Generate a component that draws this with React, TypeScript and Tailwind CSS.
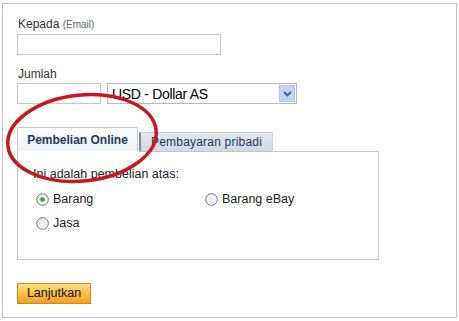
import React from "react";

function Radio({ checked }: { checked?: boolean }) {
  return (
    <svg width="13" height="13" viewBox="0 0 13 13" className="shrink-0">
      <defs>
        <linearGradient id={checked ? "rg1" : "rg2"} x1="0" y1="0" x2="1" y2="1">
          <stop offset="0" stopColor="#e2e2e2" />
          <stop offset="1" stopColor="#ffffff" />
        </linearGradient>
      </defs>
      <circle cx="6.5" cy="6.5" r="5.8" fill={`url(#${checked ? "rg1" : "rg2"})`} stroke="#6f7680" strokeWidth="1" />
      {checked && <circle cx="6.5" cy="6.5" r="2.2" fill="#3f9a3a" />}
    </svg>
  );
}

export default function App() {
  return (
    <div className="w-[459px] h-[321px] bg-white font-['Liberation_Sans',Arial,sans-serif] text-[#333] relative overflow-hidden">
      <div className="ml-[2px] mt-[3px] w-[455px] h-[315px] border border-[#bcc1c9] pl-[14px] pt-[13px] flex flex-col">
        <div className="text-[12px] leading-[14px] pl-[1px]">
          Kepada <span className="text-[10px] text-[#666]">(Email)</span>
        </div>
        <div className="mt-[2px] w-[204px] h-[21px] border border-[#c6c6c6]" />
        <div className="mt-[12px] text-[12px] leading-[14px] pl-[1px]">Jumlah</div>
        <div className="mt-[2px] flex gap-[6px]">
          <div className="w-[84px] h-[21px] border border-[#c6c6c6]" />
          <div className="w-[190px] h-[21px] border border-[#b5b8bd] flex items-center justify-between pl-[4px] pr-[1px]">
            <span className="text-[14px] leading-[16px] text-black tracking-[-0.3px]">USD - Dollar AS</span>
            <div className="w-[16px] h-[17px] bg-[#c5d4f4] border border-[#b2c4ec] flex items-center justify-center">
              <svg width="9" height="6" viewBox="0 0 9 6">
                <path d="M1 1 L4.5 4.5 L8 1" fill="none" stroke="#4a5d86" strokeWidth="1.8" />
              </svg>
            </div>
          </div>
        </div>
        <div className="mt-[23px] flex items-end">
          <div className="w-[121px] h-[24px] border border-b-0 border-[#c8ccd2] bg-gradient-to-b from-[#ffffff] to-[#eef1f5] flex items-center justify-center">
            <span className="text-[12px] font-bold text-[#1c3a60]">Pembelian Online</span>
          </div>
          <div className="ml-[1px] w-[134px] h-[19px] border-l-2 border-l-[#858b94] border-t border-t-[#cdd3db] border-r border-r-[#cdd3db] bg-gradient-to-b from-[#e3e8ef] to-[#d2d9e3] flex items-center pl-[10px]">
            <span className="text-[12px] text-[#1f3658] tracking-[0.2px]">Pembayaran pribadi</span>
          </div>
        </div>
        <div className="w-[362px] h-[109px] border border-t-0 border-[#c4c4c4] relative">
          <div className="absolute left-[121px] right-0 top-0 border-t border-[#c4c4c4]" />
          <div className="pl-[15px] pt-[16px] text-[12.5px] leading-[14px] text-[#222]">Ini adalah pembelian atas:</div>
          <div className="mt-[9px] pl-[18px] flex">
            <div className="w-[169px] flex items-center gap-[4px]">
              <Radio checked />
              <span className="text-[12.5px] text-[#222]">Barang</span>
            </div>
            <div className="flex items-center gap-[4px]">
              <Radio />
              <span className="text-[12.5px] text-[#222]">Barang eBay</span>
            </div>
          </div>
          <div className="mt-[5px] pl-[18px] flex items-center gap-[4px]">
            <Radio />
            <span className="text-[12.5px] text-[#222]">Jasa</span>
          </div>
        </div>
        <div className="mt-[20px]">
          <button className="w-[74px] h-[21px] border border-[#c98a2e] bg-gradient-to-b from-[#ffe08a] via-[#fbc044] to-[#f4a21c] text-[12.5px] text-[#111] leading-[19px]">
            Lanjutkan
          </button>
        </div>
      </div>
      <svg className="absolute left-0 top-0 pointer-events-none" width="459" height="321" viewBox="0 0 459 321">
        <ellipse cx="82" cy="138" rx="74.5" ry="43" transform="rotate(-6 82 138)" fill="none" stroke="#c8171f" strokeWidth="3.5" />
      </svg>
    </div>
  );
}
